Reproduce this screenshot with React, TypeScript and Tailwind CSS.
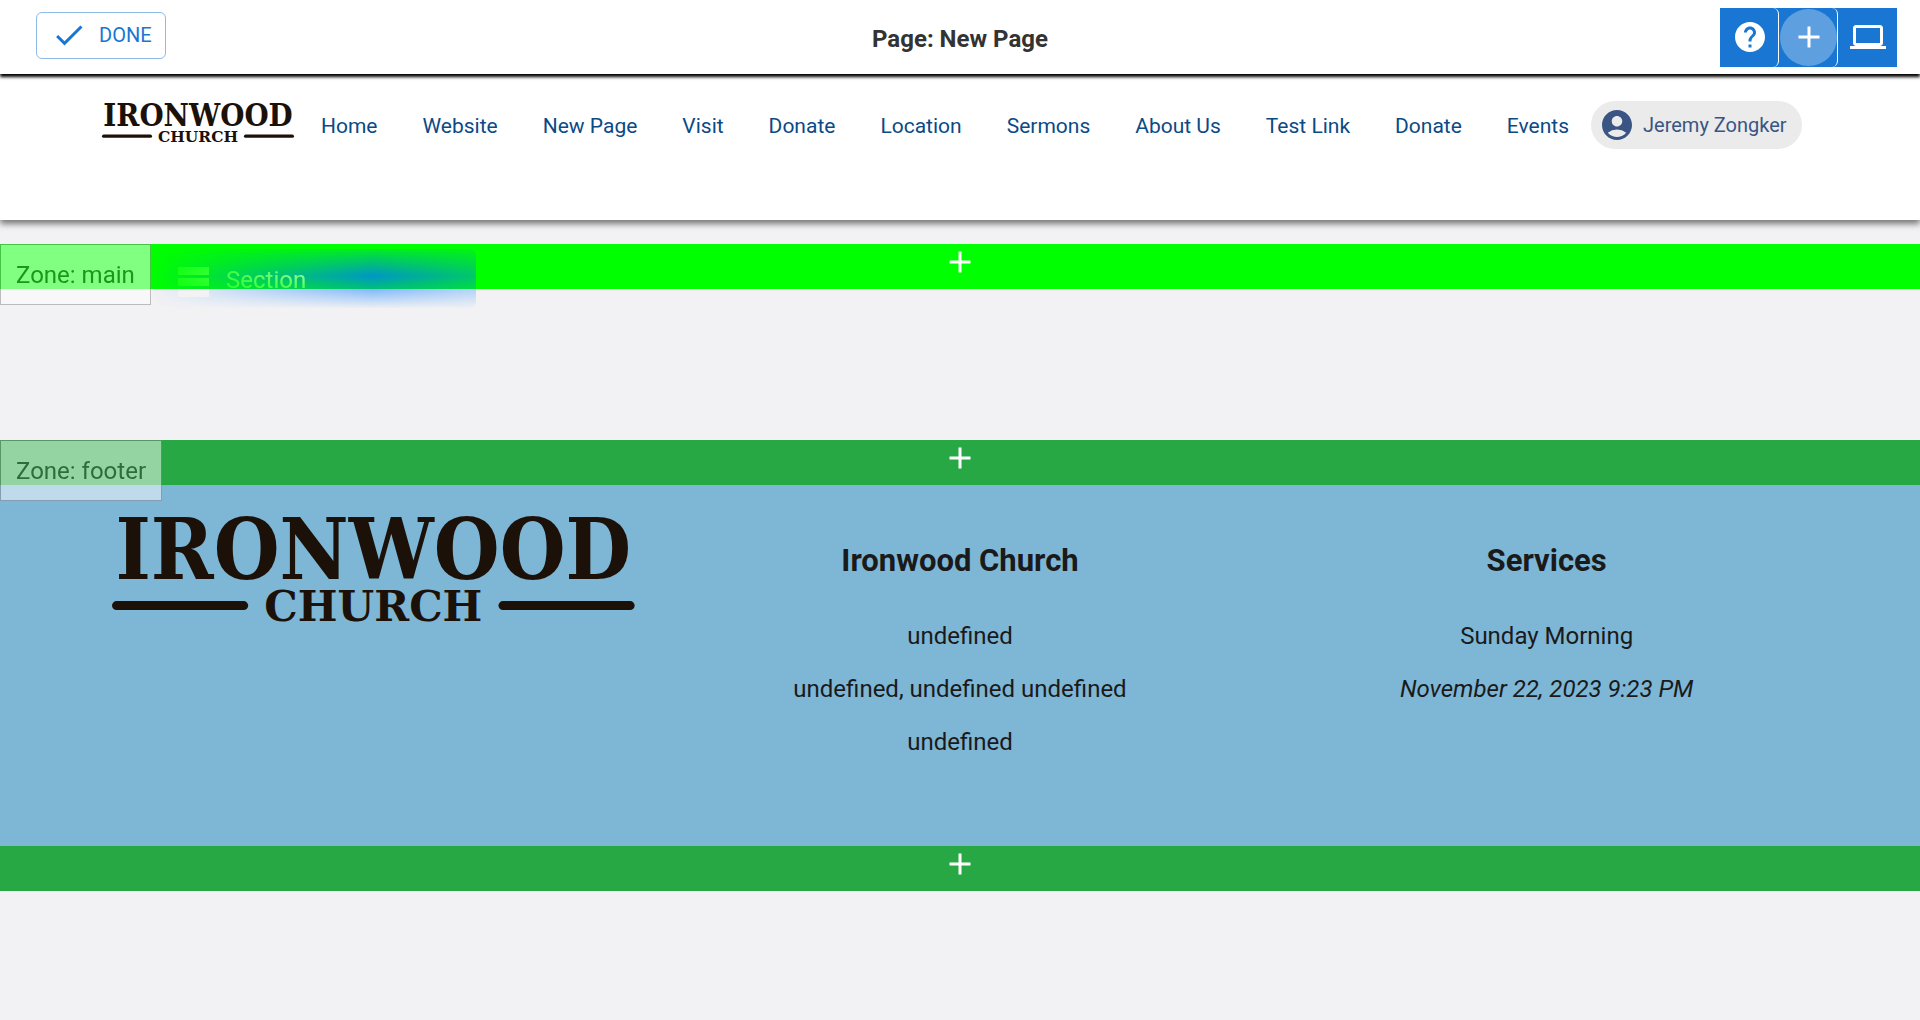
import type { ReactNode } from "react";
import { MdAccountCircle, MdAdd, MdComputer, MdDone, MdHelp } from "react-icons/md";

const NAV_LINKS = [
  "Home",
  "Website",
  "New Page",
  "Visit",
  "Donate",
  "Location",
  "Sermons",
  "About Us",
  "Test Link",
  "Donate",
  "Events",
];

function Logo({ className }: { className: string }) {
  return (
    <svg viewBox="0 0 522 104" className={`overflow-visible ${className}`} role="img" aria-label="Ironwood Church" fill="#1c1108">
      <text x="261" y="61" textAnchor="middle" fontSize="84" fontWeight="700" fontFamily="'DejaVu Serif Condensed', 'DejaVu Serif', serif">
        IRONWOOD
      </text>
      <text x="261" y="103" textAnchor="middle" fontSize="42" fontWeight="700" fontFamily="'DejaVu Serif', serif">
        CHURCH
      </text>
      <rect x="0" y="83" width="136" height="9" rx="4.5" />
      <rect x="386" y="83" width="136" height="9" rx="4.5" />
    </svg>
  );
}

function AddBar({ label, className }: { label: string; className: string }) {
  return (
    <button type="button" aria-label={label} className={`flex h-[45px] w-full justify-center text-white ${className}`}>
      <MdAdd size={36} />
    </button>
  );
}

function Zone({ name, barClass, children }: { name: string; barClass: string; children?: ReactNode }) {
  return (
    <section className="relative">
      <div className="absolute top-0 left-0 z-10 border border-[#888] bg-white px-[15px] pt-3 pb-[11px] text-2xl leading-9 text-[#333] opacity-50">
        Zone: {name}
      </div>
      <AddBar label={`Add to top of ${name}`} className={barClass} />
      {children}
    </section>
  );
}

function ToolButton({ label, children, last }: { label: string; children: ReactNode; last?: boolean }) {
  return (
    <button type="button" aria-label={label} className="relative flex h-[59px] w-[59px] items-center justify-center pb-px">
      {children}
      {!last && <span className="absolute inset-0 rounded-md border-r border-white" />}
    </button>
  );
}

export default function App() {
  return (
    <div className="min-h-screen bg-[#f2f2f4] font-['Roboto',sans-serif] text-[#1a1a1a]">
      <header className="relative z-20 grid h-[74px] grid-cols-3 bg-white shadow-[0_3px_3px_0_#000]">
        <div className="pt-3 pl-9">
          <button
            type="button"
            className="flex h-[47px] items-center gap-3 rounded-md border border-[#8cbbe9] pr-[13px] pb-px pl-[14px] text-xl text-[#1976d2]"
          >
            <MdDone size={36} />
            DONE
          </button>
        </div>
        <h1 className="pt-[21px] text-center text-2xl leading-9 font-bold text-[#333]">Page: New Page</h1>
        <div className="flex justify-end pt-2 pr-[23px]">
          <div className="flex h-[59px] bg-[#1976d2] text-white">
            <ToolButton label="Help">
              <MdHelp size={36} />
            </ToolButton>
            <ToolButton label="Add">
              <span className="absolute inset-px rounded-full bg-white/30" />
              <MdAdd size={36} />
            </ToolButton>
            <ToolButton label="Preview" last>
              <MdComputer size={36} />
            </ToolButton>
          </div>
        </div>
      </header>

      <div className="relative z-10 h-[146px] bg-white shadow-[0_4px_6px_0_rgba(0,0,0,0.5)]">
        <div className="flex items-start pt-[27px] pl-[102px]">
          <Logo className="mt-[3px] w-[192px] shrink-0" />
          <nav className="flex gap-[45px] pt-px pr-[22px] pl-[27px] text-[21px] leading-[48px] whitespace-nowrap text-[#0b4a85]">
            {NAV_LINKS.map((link, i) => (
              <a key={i} href="#">
                {link}
              </a>
            ))}
          </nav>
          <button type="button" className="flex h-12 items-center gap-2 rounded-full bg-[#ebebeb] pr-[15px] pl-2 text-xl whitespace-nowrap text-[#3a5583]">
            <MdAccountCircle size={36} />
            Jeremy Zongker
          </button>
        </div>
      </div>

      <main className="pt-6">
        <div className="relative min-h-[196px]">
          <Zone name="main" barClass="bg-[#00ff00]" />
          <div className="absolute top-[5px] left-[150px] flex h-[59px] w-[326px] items-center gap-[17px] rounded-md bg-[#0078ff] pt-[3px] pl-7 text-2xl text-white opacity-78 [mask-composite:intersect] [mask-image:linear-gradient(to_right,transparent,#000_223px,transparent_446px),linear-gradient(transparent_-6px,#000_27px,transparent_60px)]">
            <svg viewBox="0 0 31 30" className="mt-1 w-[31px]" fill="currentColor">
              <path d="M0 0h31v8H0zM0 11h31v8H0zM0 22h31v8H0z" />
            </svg>
            Section
          </div>
        </div>

        <Zone name="footer" barClass="bg-[#28a745]">
          <footer className="grid min-h-[361px] grid-cols-3 bg-[#7eb6d6] px-20 text-center text-2xl leading-9">
            <div className="flex items-start px-8 pt-[33px]">
              <Logo className="w-full" />
            </div>
            <div>
              <h2 className="mt-[58px] mb-[39px] text-[31px] leading-9 font-bold">Ironwood Church</h2>
              <p className="mb-[17px]">undefined</p>
              <p className="mb-[17px]">undefined, undefined undefined</p>
              <p>undefined</p>
            </div>
            <div>
              <h2 className="mt-[58px] mb-[39px] text-[31px] leading-9 font-bold">Services</h2>
              <p className="mb-[17px]">Sunday Morning</p>
              <p className="italic">November 22, 2023 9:23 PM</p>
            </div>
          </footer>
          <AddBar label="Add to bottom of footer" className="bg-[#28a745]" />
        </Zone>
      </main>
    </div>
  );
}
